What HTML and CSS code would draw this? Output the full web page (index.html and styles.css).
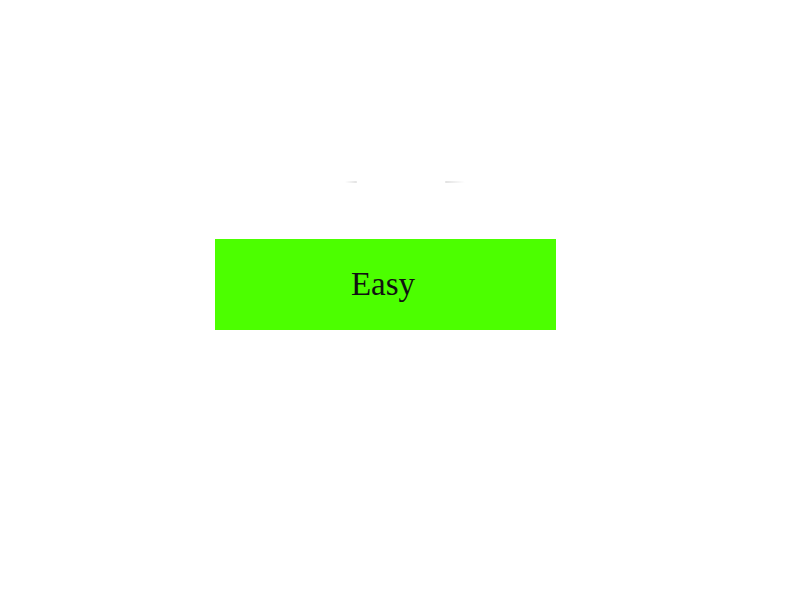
FILE: index.html
```html
<!DOCTYPE html>
<html lang="en">
<head>
<meta charset="utf-8">
<title>Easy</title>
<link rel="stylesheet" href="styles.css">
</head>
<body>
<main class="stage">
  <div class="marks">
    <span class="mark mark-left"></span>
    <span class="mark mark-right"></span>
  </div>
  <div class="level">Easy</div>
</main>
</body>
</html>
```

FILE: styles.css
```css
html, body {
  margin: 0;
  padding: 0;
  background: #ffffff;
}

.stage {
  width: 800px;
  height: 600px;
  padding: 181px 0 0 215px;
  box-sizing: border-box;
  display: flex;
  flex-direction: column;
}

.marks {
  display: flex;
  height: 2px;
  padding-left: 130px;
  gap: 88px;
  margin-bottom: 56px;
}

.mark {
  display: block;
  height: 2px;
  border-radius: 1px;
}

.mark-left {
  width: 12px;
  background: linear-gradient(to right, rgba(200,200,200,0), rgba(205,205,205,0.6));
}

.mark-right {
  width: 20px;
  background: linear-gradient(to right, rgba(205,205,205,0.6), rgba(200,200,200,0));
}

.level {
  width: 341px;
  height: 91px;
  background: #4cff00;
  display: flex;
  align-items: center;
  justify-content: center;
  font-family: "Liberation Serif", "Times New Roman", serif;
  font-size: 33px;
  color: #111111;
  padding: 0 5px 0 0;
  box-sizing: border-box;
}
```
